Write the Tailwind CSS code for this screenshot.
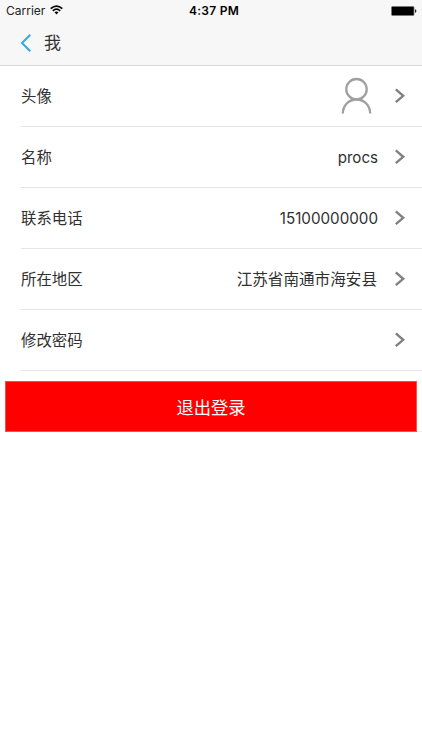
<!DOCTYPE html>
<html lang="zh-CN">
<head>
<meta charset="utf-8">
<title>我</title>
<script src="https://cdn.jsdelivr.net/npm/@tailwindcss/browser@4"></script>
</head>
<body class="h-[750px] w-[422px] overflow-hidden bg-white font-['Inter','Noto_Sans_CJK_SC',sans-serif] text-[15.4px] text-[#303030]">
<header class="h-[66px] border-b border-[#d9d9d9] bg-[#f7f7f7]">
  <div class="grid h-[22px] grid-cols-3 items-center pr-[5px] pl-[6px] text-black">
    <div class="flex items-center gap-[5px] text-[12px] leading-[22px] text-[#222]">
      <span>Carrier</span>
      <svg class="-mt-[2px] h-[10px] w-[13px]" viewBox="0 0 13 10" fill="none" stroke="#000" stroke-width="1.7"><path d="M0.7 3.6Q6.5-1.5 12.3 3.6M2.8 5.8Q6.5 2.6 10.2 5.8"/><path d="M4.5 7.2Q6.5 5.6 8.5 7.2L6.5 9.5Z" fill="#000" stroke="none"/></svg>
    </div>
    <div class="pl-[5px] text-center text-[12px] leading-[22px] font-semibold tracking-[0.25px] whitespace-nowrap">4:37 PM</div>
    <svg class="h-[10px] w-[26px] justify-self-end" viewBox="0 0 26 10"><rect x="0.5" y="0.5" width="22.5" height="9" rx="1" stroke="#777" stroke-width="0.8"/><path d="M24 3.5h1q.8 1.5 0 3h-1z" fill="#222"/></svg>
  </div>
  <div class="flex h-[42px] items-center pl-[20px]">
    <svg class="h-[20px] w-[12px]" viewBox="0 0 12 20" fill="none" stroke="#36a9e1" stroke-width="2"><path d="M10.3 1.7L2 10l8.3 8.3"/></svg>
    <h1 class="ml-[12px] text-[17px] leading-[24px] text-[#333]">我</h1>
  </div>
</header>
<main>
  <ul class="pl-[21px]">
    <li class="flex h-[61px] items-center border-b border-[#e4e4e4] pr-[16px]">
      <span class="pt-[2px]">头像</span>
      <svg class="mr-[22px] ml-auto h-[38px] w-[32px]" viewBox="0 0 32 38" fill="none" stroke="#a0a0a0" stroke-width="2.3"><circle cx="16.5" cy="12.2" r="10.2"/><path d="M2.8 36.5C3 28.5 8.5 22.5 16.5 22.5S30 28.5 30.2 36.5"/></svg>
      <svg class="h-[16px] w-[12px]" viewBox="0 0 12 16" fill="none" stroke="#808080" stroke-width="2.4"><path d="M1.8 1.4L9.2 7.8l-7.4 6.4"/></svg>
    </li>
    <li class="flex h-[61px] items-center border-b border-[#e4e4e4] pr-[16px]">
      <span class="pt-[2px]">名称</span><span class="mr-[16px] ml-auto pt-[2px] text-[15.1px]">procs</span>
      <svg class="h-[16px] w-[12px]" viewBox="0 0 12 16" fill="none" stroke="#808080" stroke-width="2.4"><path d="M1.8 1.4L9.2 7.8l-7.4 6.4"/></svg>
    </li>
    <li class="flex h-[61px] items-center border-b border-[#e4e4e4] pr-[16px]">
      <span class="pt-[2px]">联系电话</span><span class="mr-[16px] ml-auto pt-[2px] text-[15.2px]">15100000000</span>
      <svg class="h-[16px] w-[12px]" viewBox="0 0 12 16" fill="none" stroke="#808080" stroke-width="2.4"><path d="M1.8 1.4L9.2 7.8l-7.4 6.4"/></svg>
    </li>
    <li class="flex h-[61px] items-center border-b border-[#e4e4e4] pr-[16px]">
      <span class="pt-[2px]">所在地区</span><span class="mr-[17px] ml-auto pt-[2px] text-[15.6px]">江苏省南通市海安县</span>
      <svg class="h-[16px] w-[12px]" viewBox="0 0 12 16" fill="none" stroke="#808080" stroke-width="2.4"><path d="M1.8 1.4L9.2 7.8l-7.4 6.4"/></svg>
    </li>
    <li class="flex h-[61px] items-center border-b border-[#e8e4ec] pr-[16px]">
      <span class="pt-[2px]">修改密码</span>
      <svg class="ml-auto h-[16px] w-[12px]" viewBox="0 0 12 16" fill="none" stroke="#808080" stroke-width="2.4"><path d="M1.8 1.4L9.2 7.8l-7.4 6.4"/></svg>
    </li>
  </ul>
  <div class="flex items-end pt-[10px] pl-[5px]">
    <button class="h-[51px] w-[412px] border border-[#f05050] bg-[#ff0000] pt-[2px] text-[17.3px] text-white">退出登录</button>
    <span class="h-px flex-1 bg-[#eeeeee]"></span>
  </div>
</main>
</body>
</html>
